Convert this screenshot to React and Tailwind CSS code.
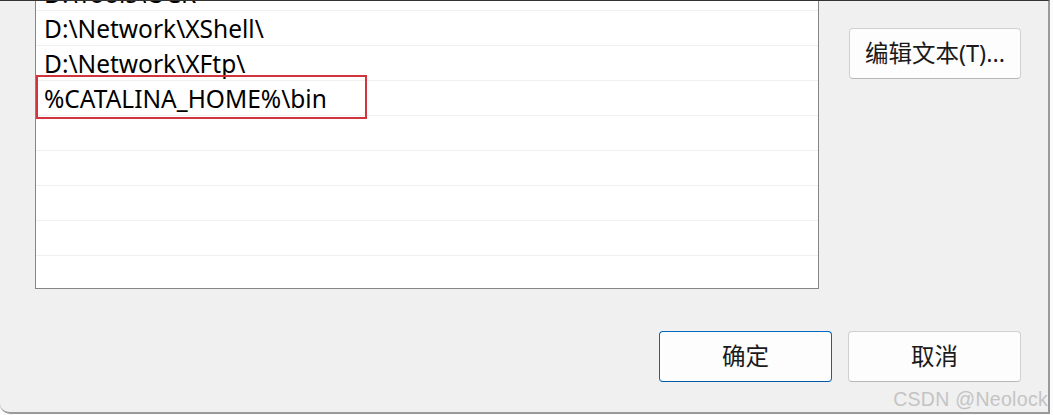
const ROWS = [
  'D:\\Tools\\OCR',
  'D:\\Network\\XShell\\',
  'D:\\Network\\XFtp\\',
  '%CATALINA_HOME%\\bin',
  '',
  '',
  '',
  '',
  '',
];

const FONT = { fontFamily: '"Noto Sans", "Noto Sans CJK SC", sans-serif' };

const Button = ({ children, primary, className = '' }) => (
  <button
    className={`flex items-center justify-center rounded-[4px] bg-[#fdfdfd] text-[23.5px] text-[#1a1a1a] ${
      primary ? 'border border-[#0067c0] border-b-[#005aa8]' : 'border border-[#d0d0d0] border-b-[#b8b8b8]'
    } ${className}`}
  >
    {children}
  </button>
);

export default function App() {
  return (
    <div className="relative w-[1053px] h-[415px] overflow-hidden bg-[#fbfbfb]" style={FONT}>
      <div className="w-[1050px] h-[414px] bg-[#f0f0f0] border-r-2 border-b-2 border-[#9a9a9a] rounded-bl-[10px] border-t border-t-[#333] flex flex-col">
        <div className="flex flex-1">
          {/* path list */}
          <div className="ml-[35px] w-[784px] h-[288px] bg-white border-x border-b border-[#858585] overflow-hidden flex flex-col">
            <div className="-mt-[25px] flex flex-col">
              {ROWS.map((row, i) => (
                <div
                  key={i}
                  className={`relative h-[35px] shrink-0 border-b border-[#f0f0f0] pl-[8px] pt-[6px] text-[24.5px] text-black leading-none whitespace-nowrap ${
                    i === ROWS.length - 1 ? 'border-b-0' : ''
                  }`}
                >
                  {row}
                  {i === 3 && (
                    <div className="absolute left-0 -top-[6px] w-[331px] h-[44px] border-2 border-[#d1343c]" />
                  )}
                </div>
              ))}
            </div>
          </div>

          <div className="ml-[30px] mt-[27px]">
            <Button className="w-[172px] h-[51px]">编辑文本(T)...</Button>
          </div>
        </div>

        <div className="flex justify-end gap-[16px] pr-[27px] pb-[30px]">
          <Button primary className="w-[173px] h-[51px]">确定</Button>
          <Button className="w-[173px] h-[51px]">取消</Button>
        </div>
      </div>

      <div
        className="absolute right-[5px] bottom-[6px] text-[19.5px] leading-none text-[#c4c4c4] tracking-[0.3px]"
        style={{ fontFamily: '"Liberation Sans", Arial, sans-serif' }}
      >
        CSDN @Neolock
      </div>
    </div>
  );
}
